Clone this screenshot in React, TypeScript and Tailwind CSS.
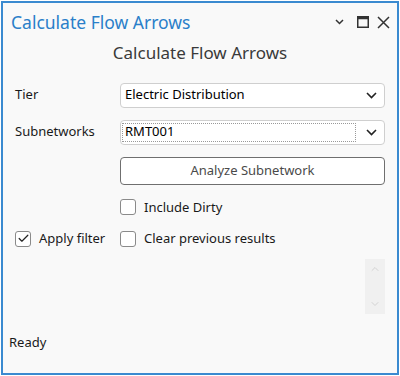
import { ChevronDown, ChevronUp, Check } from "lucide-react";

const font = { fontFamily: '"Noto Sans", "Open Sans", sans-serif' };

const Chevron = () => (
  <svg width="11" height="7" viewBox="0 0 11 7" className="shrink-0">
    <path d="M1 1l4.5 4.5L10 1" fill="none" stroke="#222" strokeWidth="1.6" />
  </svg>
);

const CheckBox = ({ checked, label }: { checked?: boolean; label: string }) => (
  <label className="flex items-center gap-2 text-[13px] text-[#1a1a1a]">
    <span className="w-[16px] h-[16px] border border-[#8a8a8a] rounded-[3px] bg-white flex items-center justify-center">
      {checked && <Check size={13} strokeWidth={2.2} color="#222" />}
    </span>
    {label}
  </label>
);

export default function App() {
  return (
    <div style={font} className="w-[400px] h-[376px] bg-white p-[1px]">
      <div className="w-full h-full border-2 border-[#3a8ad0] bg-[#f9f9f9] flex flex-col">
        <div className="flex items-center justify-between pl-[8px] pr-[7px] h-[36px] pt-[2px]">
          <h1 className="text-[17.5px] text-[#2a7fc9]">Calculate Flow Arrows</h1>
          <div className="flex items-center text-[#333]">
            <svg width="9" height="6" viewBox="0 0 9 6">
              <path d="M1 1l3.5 3.5L8 1" fill="none" stroke="#333" strokeWidth="1.5" />
            </svg>
            <svg width="12" height="12" viewBox="0 0 12 12" className="ml-[13px]">
              <rect x="0.75" y="0.75" width="10.5" height="10.5" fill="none" stroke="#333" strokeWidth="1.5" />
              <rect x="0.75" y="0.75" width="10.5" height="2.5" fill="#333" />
            </svg>
            <svg width="13" height="13" viewBox="0 0 13 13" className="ml-[8px]">
              <path d="M1 1l11 11M12 1L1 12" fill="none" stroke="#333" strokeWidth="1.5" />
            </svg>
          </div>
        </div>
        <h2 className="text-center text-[17px] text-[#3a3a3a] mt-[1px]">Calculate Flow Arrows</h2>
        <div className="flex flex-col pl-[12px] pr-[12px] mt-[17px]">
          <div className="flex items-center h-[25px]">
            <span className="w-[105px] text-[13px] text-[#1a1a1a]">Tier</span>
            <div className="flex-1 h-[25px] border border-[#cfcfcf] rounded-[4px] bg-white flex items-center justify-between pl-[4px] pr-[7px] text-[13px] text-black">
              Electric Distribution
              <Chevron />
            </div>
          </div>
          <div className="flex items-center h-[25px] mt-[12px]">
            <span className="w-[105px] text-[13px] text-[#1a1a1a]">Subnetworks</span>
            <div className="flex-1 h-[25px] border border-[#cfcfcf] rounded-[4px] bg-white flex items-center justify-between pl-[1px] pr-[7px] text-[13px] text-black">
              <span className="flex-1 h-[19px] border border-dotted border-[#999] mr-[10px] flex items-center pl-[2px]">
                RMT001
              </span>
              <Chevron />
            </div>
          </div>
          <div className="flex mt-[12px]">
            <span className="w-[105px]" />
            <button className="flex-1 h-[28px] border border-[#6f6f6f] rounded-[4px] bg-white text-[13px] text-[#4a4a4a]">
              Analyze Subnetwork
            </button>
          </div>
          <div className="flex mt-[13px]">
            <span className="w-[105px]" />
            <CheckBox label="Include Dirty" />
          </div>
          <div className="flex mt-[12px]">
            <span className="w-[105px]">
              <CheckBox checked label="Apply filter" />
            </span>
            <CheckBox label="Clear previous results" />
          </div>
          <div className="flex justify-end mt-[10px]">
            <div className="w-[20px] h-[55px] bg-[#f0f0f0] flex flex-col items-center justify-between py-[4px] text-[#c8c8c8]">
              <ChevronUp size={12} strokeWidth={1.5} />
              <ChevronDown size={12} strokeWidth={1.5} />
            </div>
          </div>
        </div>
        <div className="pl-[6px] mt-[19px] text-[13px] text-[#1a1a1a]">Ready</div>
      </div>
    </div>
  );
}
